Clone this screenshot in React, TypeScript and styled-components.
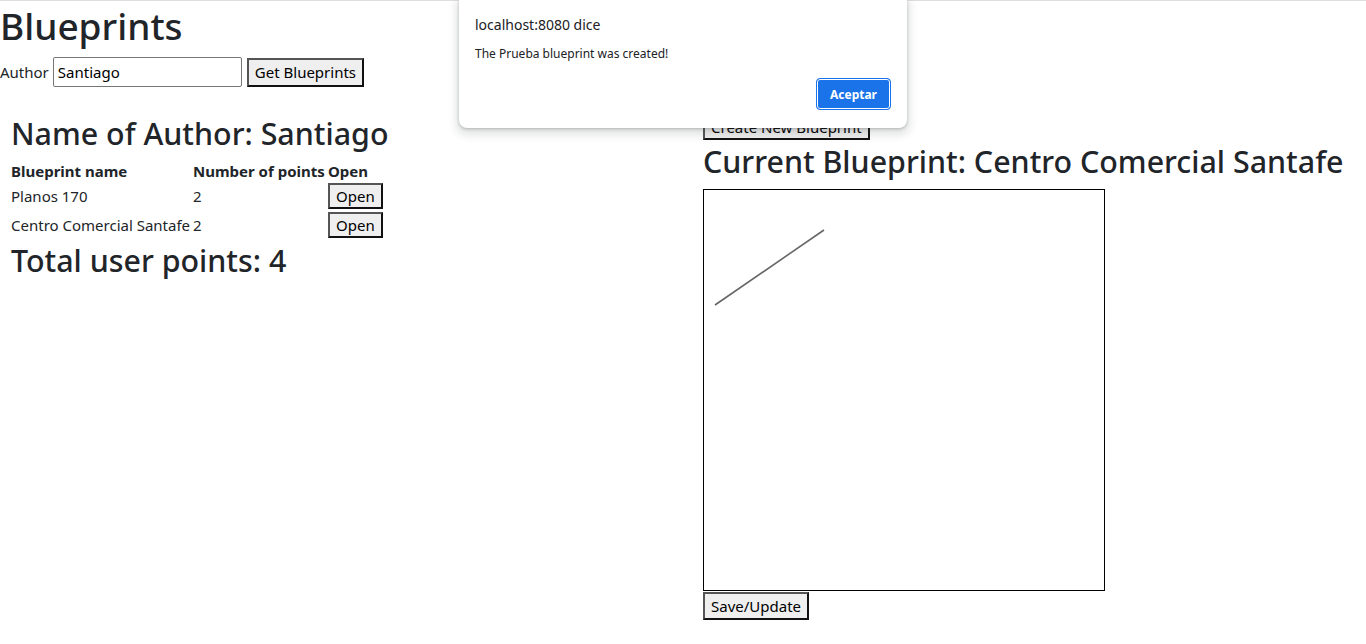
import React from "react";
import styled, { createGlobalStyle } from "styled-components";

const Global = createGlobalStyle`
  html, body { margin: 0; padding: 0; background: #fff; }
  body {
    font-family: "Noto Sans", "Open Sans", sans-serif;
    font-size: 15px;
    line-height: 1.5;
    color: #212529;
  }
`;

const Page = styled.div`
  border-top: 1px solid #dedede;
  min-height: 643px;
  position: relative;
`;

const Title = styled.h1`
  margin: 0;
  font-size: 37px;
  font-weight: 500;
  line-height: 50px;
`;

const SearchRow = styled.div`
  display: flex;
  align-items: center;
  height: 30px;
  margin-top: 6px;
`;

const Label = styled.label`
  margin-right: 4px;
`;

const TextInput = styled.input`
  box-sizing: border-box;
  width: 189px;
  height: 30px;
  padding: 1px 4px;
  border: 1px solid #767676;
  border-radius: 2px;
  font: inherit;
  color: #000;
  margin-right: 5px;
`;

const Button = styled.button<{ $h?: number }>`
  box-sizing: border-box;
  height: ${(p) => p.$h ?? 26}px;
  padding: 0 6px;
  background: #efefef;
  border: 2px solid;
  border-color: #555 #111 #111 #555;
  font-family: inherit;
  font-size: 15px;
  line-height: 1;
  color: #000;
  cursor: pointer;
`;

const Columns = styled.div`
  display: grid;
  grid-template-columns: 683px 1fr;
  margin-top: 27px;
`;

const LeftCol = styled.div`
  padding-left: 11px;
  padding-top: 1px;
`;

const RightCol = styled.div`
  padding-left: 20px;
  display: flex;
  flex-direction: column;
  align-items: flex-start;
`;

const Heading = styled.h2`
  margin: 0 0 6px;
  font-size: 30.4px;
  font-weight: 500;
  line-height: 38px;
  white-space: nowrap;
`;

const CurrentHeading = styled(Heading)`
  margin: 3px 0 8px;
`;

const Table = styled.table`
  border-collapse: collapse;
  border-spacing: 0;
`;

const Th = styled.th<{ $w?: number }>`
  padding: 0;
  text-align: left;
  font-weight: 700;
  height: 24px;
  white-space: nowrap;
  min-width: ${(p) => (p.$w ? `${p.$w}px` : "auto")};
`;

const Td = styled.td`
  padding: 0 0 3px;
  white-space: nowrap;
  height: 26px;
`;

const TotalHeading = styled(Heading)`
  margin-top: 1px;
`;

const Canvas = styled.div`
  box-sizing: border-box;
  width: 402px;
  height: 402px;
  border: 1px solid #000;
  margin-bottom: 1px;
`;

const Dialog = styled.div`
  position: absolute;
  top: -1px;
  left: 459px;
  width: 448px;
  height: 128px;
  box-sizing: border-box;
  background: #fff;
  border-radius: 0 0 8px 8px;
  box-shadow: 0 1px 3px rgba(60, 64, 67, 0.3), 0 4px 8px 3px rgba(60, 64, 67, 0.15);
  padding: 15px 16px 0 16px;
  font-family: "Noto Sans", "Open Sans", sans-serif;
  color: #202124;
  display: flex;
  flex-direction: column;
`;

const DialogTitle = styled.div`
  font-size: 14px;
  line-height: 20px;
`;

const DialogMessage = styled.div`
  font-size: 12px;
  line-height: 16px;
  margin-top: 11px;
`;

const DialogActions = styled.div`
  display: flex;
  justify-content: flex-end;
  margin-top: 16px;
`;

const AcceptButton = styled.button`
  box-sizing: border-box;
  width: 75px;
  height: 32px;
  background: #1a73e8;
  border: 1px solid #1a73e8;
  box-shadow: inset 0 0 0 1px #fff;
  border-radius: 4px;
  color: #fff;
  font-family: inherit;
  font-size: 12px;
  font-weight: 700;
  cursor: pointer;
`;

const rows = [
  { name: "Planos 170", points: 2 },
  { name: "Centro Comercial Santafe", points: 2 },
];

export default function App() {
  return (
    <>
      <Global />
      <Page>
        <Title>Blueprints</Title>
        <SearchRow>
          <Label>Author</Label>
          <TextInput defaultValue="Santiago" />
          <Button $h={29}>Get Blueprints</Button>
        </SearchRow>
        <Columns>
          <LeftCol>
            <Heading>Name of Author: Santiago</Heading>
            <Table>
              <thead>
                <tr>
                  <Th $w={182}>Blueprint name</Th>
                  <Th $w={135}>Number of points</Th>
                  <Th>Open</Th>
                </tr>
              </thead>
              <tbody>
                {rows.map((r) => (
                  <tr key={r.name}>
                    <Td>{r.name}</Td>
                    <Td>{r.points}</Td>
                    <Td>
                      <Button>Open</Button>
                    </Td>
                  </tr>
                ))}
              </tbody>
            </Table>
            <TotalHeading>Total user points: 4</TotalHeading>
          </LeftCol>
          <RightCol>
            <Button>Create New Blueprint</Button>
            <CurrentHeading>Current Blueprint: Centro Comercial Santafe</CurrentHeading>
            <Canvas>
              <svg width="400" height="400" viewBox="0 0 400 400">
                <line x1="11" y1="115" x2="120" y2="40" stroke="#666" strokeWidth="1.6" />
              </svg>
            </Canvas>
            <Button $h={28}>Save/Update</Button>
          </RightCol>
        </Columns>
        <Dialog>
          <DialogTitle>localhost:8080 dice</DialogTitle>
          <DialogMessage>The Prueba blueprint was created!</DialogMessage>
          <DialogActions>
            <AcceptButton>Aceptar</AcceptButton>
          </DialogActions>
        </Dialog>
      </Page>
    </>
  );
}
